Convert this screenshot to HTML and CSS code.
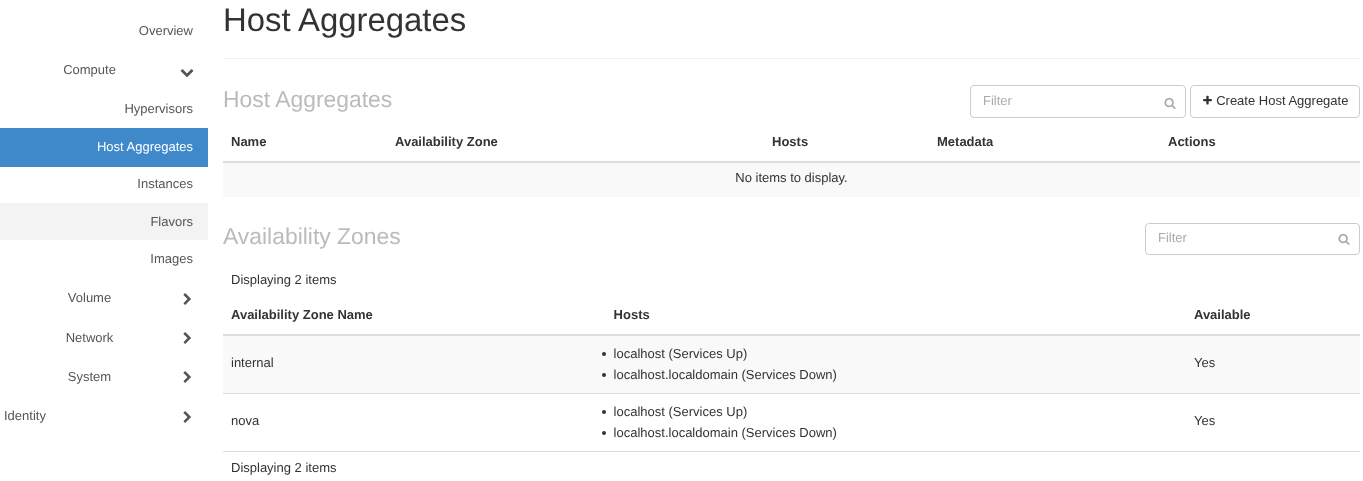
FILE: index.html

```html
<!DOCTYPE html>
<html lang="en">
<head>
  <meta charset="UTF-8" />
  <title>Host Aggregates</title>
  <link rel="stylesheet" href="styles.css">
</head>
<body>
  <nav class="sidebar">
    <a class="nav-link">Overview</a>
    <div class="nav-group first-group">
      <span class="nav-group-label">Compute</span>
      <svg class="chevron" viewBox="0 0 1792 1792"><path d="M1683 808l-742 741q-19 19-45 19t-45-19l-742-741q-19-19-19-45.5t19-45.5l166-165q19-19 45-19t45 19l531 531 531-531q19-19 45-19t45 19l166 165q19 19 19 45.5t-19 45.5z"/></svg>
    </div>
    <a class="nav-link tight">Hypervisors</a>
    <a class="nav-link active">Host Aggregates</a>
    <a class="nav-link">Instances</a>
    <a class="nav-link hover">Flavors</a>
    <a class="nav-link tight">Images</a>
    <div class="nav-group">
      <span class="nav-group-label">Volume</span>
      <svg class="chevron chevron-right" viewBox="0 0 1792 1792"><path d="M1363 877l-742 742q-19 19-45 19t-45-19l-166-166q-19-19-19-45t19-45l531-531-531-531q-19-19-19-45t19-45l166-166q19-19 45-19t45 19l742 742q19 19 19 45t-19 45z"/></svg>
    </div>
    <div class="nav-group">
      <span class="nav-group-label">Network</span>
      <svg class="chevron chevron-right" viewBox="0 0 1792 1792"><path d="M1363 877l-742 742q-19 19-45 19t-45-19l-166-166q-19-19-19-45t19-45l531-531-531-531q-19-19-19-45t19-45l166-166q19-19 45-19t45 19l742 742q19 19 19 45t-19 45z"/></svg>
    </div>
    <div class="nav-group">
      <span class="nav-group-label">System</span>
      <svg class="chevron chevron-right" viewBox="0 0 1792 1792"><path d="M1363 877l-742 742q-19 19-45 19t-45-19l-166-166q-19-19-19-45t19-45l531-531-531-531q-19-19-19-45t19-45l166-166q19-19 45-19t45 19l742 742q19 19 19 45t-19 45z"/></svg>
    </div>
    <div class="nav-group">
      <span class="nav-group-label left">Identity</span>
      <svg class="chevron chevron-right" viewBox="0 0 1792 1792"><path d="M1363 877l-742 742q-19 19-45 19t-45-19l-166-166q-19-19-19-45t19-45l531-531-531-531q-19-19-19-45t19-45l166-166q19-19 45-19t45 19l742 742q19 19 19 45t-19 45z"/></svg>
    </div>
  </nav>

  <main class="content">
    <h1 class="page-title">Host Aggregates</h1>

    <div class="section-head head-first">
      <h2 class="section-title">Host Aggregates</h2>
      <div class="filter filter-wide">
        <span>Filter</span>
        <svg class="search" viewBox="0 0 1792 1792"><path d="M1216 832q0-185-131.5-316.5t-316.5-131.5-316.5 131.5-131.5 316.5 131.5 316.5 316.5 131.5 316.5-131.5 131.5-316.5zm512 832q0 52-38 90t-90 38q-54 0-90-38l-343-342q-179 124-399 124-143 0-273.5-55.5t-225-150-150-225-55.5-273.5 55.5-273.5 150-225 225-150 273.5-55.5 273.5 55.5 225 150 150 225 55.5 273.5q0 220-124 399l343 343q37 37 37 90z"/></svg>
      </div>
      <button class="btn">
        <svg class="plus" viewBox="0 0 1792 1792"><path d="M1600 736v192q0 40-28 68t-68 28h-416v416q0 40-28 68t-68 28h-192q-40 0-68-28t-28-68v-416h-416q-40 0-68-28t-28-68v-192q0-40 28-68t68-28h416v-416q0-40 28-68t68-28h192q40 0 68 28t28 68v416h416q40 0 68 28t28 68z"/></svg>
        Create Host Aggregate
      </button>
    </div>

    <table class="data-table">
      <colgroup>
        <col class="w164"><col class="w377"><col class="w165"><col class="w231"><col>
      </colgroup>
      <thead>
        <tr><th>Name</th><th>Availability Zone</th><th>Hosts</th><th>Metadata</th><th>Actions</th></tr>
      </thead>
      <tbody>
        <tr class="striped"><td class="empty" colspan="5">No items to display.</td></tr>
      </tbody>
    </table>

    <div class="section-head head-second">
      <h2 class="section-title">Availability Zones</h2>
      <div class="filter filter-narrow">
        <span>Filter</span>
        <svg class="search" viewBox="0 0 1792 1792"><path d="M1216 832q0-185-131.5-316.5t-316.5-131.5-316.5 131.5-131.5 316.5 131.5 316.5 316.5 131.5 316.5-131.5 131.5-316.5zm512 832q0 52-38 90t-90 38q-54 0-90-38l-343-342q-179 124-399 124-143 0-273.5-55.5t-225-150-150-225-55.5-273.5 55.5-273.5 150-225 225-150 273.5-55.5 273.5 55.5 225 150 150 225 55.5 273.5q0 220-124 399l343 343q37 37 37 90z"/></svg>
      </div>
    </div>

    <div class="count">Displaying 2 items</div>

    <table class="data-table">
      <colgroup>
        <col class="w383"><col class="w580"><col>
      </colgroup>
      <thead>
        <tr><th>Availability Zone Name</th><th>Hosts</th><th>Available</th></tr>
      </thead>
      <tbody>
        <tr class="striped">
          <td class="cell-text">internal</td>
          <td><ul class="hosts"><li>localhost (Services Up)</li><li>localhost.localdomain (Services Down)</li></ul></td>
          <td class="cell-text">Yes</td>
        </tr>
        <tr>
          <td class="cell-text">nova</td>
          <td><ul class="hosts"><li>localhost (Services Up)</li><li>localhost.localdomain (Services Down)</li></ul></td>
          <td class="cell-text">Yes</td>
        </tr>
      </tbody>
    </table>

    <div class="count count-foot">Displaying 2 items</div>
  </main>
</body>
</html>
```

FILE: styles.css

```css
html, body {
  height: 100%;
}
body {
  margin: 0;
  display: flex;
  overflow: hidden;
  background: #fff;
  color: #333;
  font-family: "Liberation Sans", Arial, sans-serif;
  font-size: 13px;
  line-height: 18.5px;
  text-rendering: geometricPrecision;
}

/* sidebar */
.sidebar {
  width: 208px;
  flex-shrink: 0;
  padding-top: 13.5px;
  color: #555;
  will-change: transform;
}
.nav-link {
  display: block;
  height: 37.5px;
  padding: 10px 15px 0 0;
  box-sizing: border-box;
  text-align: right;
}
.nav-link:first-child {
  padding-top: 8px;
}
.nav-link.tight {
  padding-top: 9.6px;
}
.nav-link.active {
  height: 39px;
  background: #3f88c9;
  color: #fff;
}
.nav-link.active + .nav-link {
  height: 36px;
  padding-top: 8px;
}
.nav-link.hover {
  background: #f3f3f3;
}
.nav-group {
  display: flex;
  align-items: center;
  height: 39.4px;
}
.nav-group-label {
  width: 179px;
  padding-top: 1.6px;
  text-align: center;
}
.first-group .nav-group-label {
  padding: 0 0 1px;
}
.nav-group-label.left {
  padding-left: 4px;
  width: 175px;
  text-align: left;
}
.chevron {
  width: 14px;
  height: 14px;
  margin-top: 3px;
  fill: #555;
  margin-left: 1px;
}
.chevron-right {
  width: 13px;
  height: 13px;
  margin-left: 2.4px;
}

/* main column */
.content {
  width: 1137px;
  margin-left: 15px;
  will-change: transform;
}
.page-title {
  margin: 0;
  height: 59px;
  box-sizing: border-box;
  border-bottom: 1px solid #eee;
  font-size: 32.9px;
  font-weight: 400;
  line-height: 40px;
}
.section-head {
  display: flex;
  align-items: center;
  justify-content: flex-end;
  gap: 4px;
}
.head-first {
  height: 33px;
  margin-top: 26px;
}
.head-second {
  height: 32px;
  margin-top: 26px;
}
.section-title {
  margin: 0 auto 5px 0;
  font-size: 22.9px;
  font-weight: 400;
  color: #bbb;
}
.filter {
  position: relative;
  box-sizing: border-box;
  height: 100%;
  padding: 6px 12px;
  border: 1px solid #ccc;
  border-radius: 4px;
  color: #aaa;
}
.filter-wide {
  width: 216px;
}
.filter-narrow {
  width: 215px;
  padding-top: 5px;
}
.search {
  position: absolute;
  right: 9.5px;
  top: 11px;
  width: 12px;
  height: 12px;
  fill: #aaa;
}
.filter-narrow .search {
  top: 9px;
}
.btn {
  width: 170px;
  height: 100%;
  padding: 0;
  border: 1px solid #ccc;
  border-radius: 4px;
  background: #fff;
  color: #333;
  font: inherit;
}
.plus {
  width: 11px;
  height: 11px;
  fill: #333;
  vertical-align: -1px;
}

/* tables */
.data-table {
  width: 100%;
  border-collapse: collapse;
  table-layout: fixed;
}
.w164 { width: 164px; }
.w377 { width: 377px; }
.w165 { width: 165px; }
.w231 { width: 231px; }
.w383 { width: 382.6px; }
.w580 { width: 580.4px; }
.data-table th {
  height: 44px;
  padding: 6px 8px 0;
  box-sizing: border-box;
  border-bottom: 2px solid #ddd;
  text-align: left;
  font-weight: 700;
}
.data-table td {
  padding: 7.5px 8px;
  border-bottom: 1px solid #ddd;
}
.data-table td.cell-text {
  padding-bottom: 9.5px;
}
.striped td {
  background: #f9f9f9;
}
.data-table td.empty {
  padding: 6px 8px 9.5px;
  border-bottom: 0;
  text-align: center;
}
.hosts {
  margin: 0;
  padding: 0;
  list-style: none;
}
.hosts li {
  position: relative;
  line-height: 21px;
}
.hosts li::before {
  content: "";
  position: absolute;
  left: -11.5px;
  top: 8.5px;
  width: 4px;
  height: 4px;
  border-radius: 50%;
  background: #333;
}
.count {
  padding: 16px 8px 1px;
}
.count-foot {
  padding: 7px 8px 0;
}
```
